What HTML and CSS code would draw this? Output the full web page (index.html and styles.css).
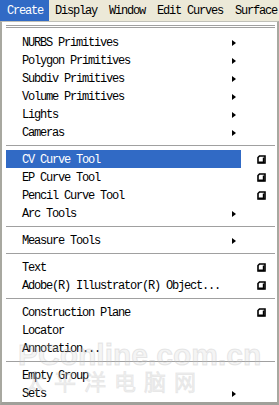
FILE: index.html
```html
<!DOCTYPE html>
<html>
<head>
<meta charset="utf-8">
<link rel="stylesheet" href="styles.css">
</head>
<body>
<div class="screen">
  <div class="menubar">
    <span class="mb-item active">Create</span>
    <span class="mb-item">Display</span>
    <span class="mb-item">Window</span>
    <span class="mb-item">Edit Curves</span>
    <span class="mb-item">Surface</span>
  </div>
  <div class="menu">
    <div class="tearoff"></div>

    <div class="row"><div class="item"><span class="label">NURBS Primitives</span><span class="arrow"></span></div><div class="opt"></div></div>
    <div class="row"><div class="item"><span class="label">Polygon Primitives</span><span class="arrow"></span></div><div class="opt"></div></div>
    <div class="row"><div class="item"><span class="label">Subdiv Primitives</span><span class="arrow"></span></div><div class="opt"></div></div>
    <div class="row"><div class="item"><span class="label">Volume Primitives</span><span class="arrow"></span></div><div class="opt"></div></div>
    <div class="row"><div class="item"><span class="label">Lights</span><span class="arrow"></span></div><div class="opt"></div></div>
    <div class="row"><div class="item"><span class="label">Cameras</span><span class="arrow"></span></div><div class="opt"></div></div>
    <div class="sep"></div>
    <div class="row"><div class="item selected"><span class="label">CV Curve Tool</span></div><div class="opt"><svg class="box" width="9" height="9" viewBox="0 0 9 9"><path d="M2.5 1H8V8H1V2.5Z" fill="#fff" stroke="#000" stroke-width="1.6"/><path d="M6.6 2.5V7.4H1.5" fill="none" stroke="#000" stroke-width="1.6"/></svg></div></div>
    <div class="row"><div class="item"><span class="label">EP Curve Tool</span></div><div class="opt"><svg class="box" width="9" height="9" viewBox="0 0 9 9"><path d="M2.5 1H8V8H1V2.5Z" fill="#fff" stroke="#000" stroke-width="1.6"/><path d="M6.6 2.5V7.4H1.5" fill="none" stroke="#000" stroke-width="1.6"/></svg></div></div>
    <div class="row"><div class="item"><span class="label">Pencil Curve Tool</span></div><div class="opt"><svg class="box" width="9" height="9" viewBox="0 0 9 9"><path d="M2.5 1H8V8H1V2.5Z" fill="#fff" stroke="#000" stroke-width="1.6"/><path d="M6.6 2.5V7.4H1.5" fill="none" stroke="#000" stroke-width="1.6"/></svg></div></div>
    <div class="row"><div class="item"><span class="label">Arc Tools</span><span class="arrow"></span></div><div class="opt"></div></div>
    <div class="sep"></div>
    <div class="row"><div class="item"><span class="label">Measure Tools</span><span class="arrow"></span></div><div class="opt"></div></div>
    <div class="sep"></div>
    <div class="row"><div class="item"><span class="label">Text</span></div><div class="opt"><svg class="box" width="9" height="9" viewBox="0 0 9 9"><path d="M2.5 1H8V8H1V2.5Z" fill="#fff" stroke="#000" stroke-width="1.6"/><path d="M6.6 2.5V7.4H1.5" fill="none" stroke="#000" stroke-width="1.6"/></svg></div></div>
    <div class="row"><div class="item"><span class="label">Adobe(R) Illustrator(R) Object...</span></div><div class="opt"><svg class="box" width="9" height="9" viewBox="0 0 9 9"><path d="M2.5 1H8V8H1V2.5Z" fill="#fff" stroke="#000" stroke-width="1.6"/><path d="M6.6 2.5V7.4H1.5" fill="none" stroke="#000" stroke-width="1.6"/></svg></div></div>
    <div class="sep"></div>
    <div class="row"><div class="item"><span class="label">Construction Plane</span></div><div class="opt"><svg class="box" width="9" height="9" viewBox="0 0 9 9"><path d="M2.5 1H8V8H1V2.5Z" fill="#fff" stroke="#000" stroke-width="1.6"/><path d="M6.6 2.5V7.4H1.5" fill="none" stroke="#000" stroke-width="1.6"/></svg></div></div>
    <div class="row"><div class="item"><span class="label">Locator</span></div><div class="opt"></div></div>
    <div class="row"><div class="item"><span class="label">Annotation...</span></div><div class="opt"></div></div>
    <div class="sep"></div>
    <div class="row"><div class="item"><span class="label">Empty Group</span></div><div class="opt"></div></div>
    <div class="row"><div class="item"><span class="label">Sets</span><span class="arrow"></span></div><div class="opt"></div></div>
  </div>
  <div class="watermark" aria-hidden="true">
    <div class="wm-en">PConline.com.cn</div>
    <div class="wm-cn">太平洋电脑网</div>
  </div>
</div>
</body>
</html>
```

FILE: styles.css
```css
html, body {
  margin: 0;
  padding: 0;
  background: #ffffff;
}
.screen {
  position: relative;
  width: 279px;
  height: 405px;
  overflow: hidden;
  font-family: "Liberation Mono", "DejaVu Sans Mono", monospace;
  font-size: 12px;
  letter-spacing: -1.2px;
  color: #000;
}
.menubar {
  display: flex;
  height: 21px;
  background: #ece9d8;
  white-space: nowrap;
}
.mb-item {
  display: flex;
  align-items: center;
  box-sizing: border-box;
  padding: 1px 6px 0 6px;
  height: 21px;
  flex: none;
}
.mb-item.active {
  background: #316ac5;
  color: #fff;
  padding-left: 7px;
  padding-right: 6px;
}
.menu {
  height: 384px;
  box-sizing: border-box;
  border-left: 2px solid #a8a8a0;
  border-right: 2px solid #a8a8a0;
  border-top: 1px solid #c0c0b8;
  border-bottom: 3px solid #a0a09a;
  padding: 0 0 0 4px;
  background: #fff;
}
.tearoff {
  height: 11px;
  box-sizing: border-box;
  margin-right: 2px;
  padding-top: 3px;
}
.tearoff::before {
  content: "";
  display: block;
  height: 1px;
  border-top: 1px solid #a0a0a0;
  border-bottom: 1px solid #a0a0a0;
}
.row {
  display: flex;
  height: 18px;
}
.item {
  width: 235px;
  flex: none;
  display: flex;
  align-items: center;
  box-sizing: border-box;
  padding: 1px 5px 0 16px;
  white-space: nowrap;
}
.item.selected {
  background: #316ac5;
  color: #fff;
}
.label {
  flex: none;
}
.arrow {
  margin-left: auto;
  width: 0;
  height: 0;
  border-top: 3.5px solid transparent;
  border-bottom: 3.5px solid transparent;
  border-left: 4px solid #000;
}
.opt {
  flex: 1;
  display: flex;
  align-items: center;
  padding-left: 16px;
}
.box {
  display: block;
}
.sep {
  height: 9px;
  box-sizing: border-box;
  padding-top: 4px;
  margin-right: 2px;
}
.sep::before {
  content: "";
  display: block;
  height: 0;
  border-top: 1px solid #a0a0a0;
  border-bottom: 1px solid #fff;
}
.watermark {
  position: absolute;
  left: 18px;
  top: 340px;
  pointer-events: none;
  color: rgba(200, 200, 200, 0.2);
  font-family: "Liberation Sans", "Noto Sans CJK SC", sans-serif;
  letter-spacing: 0;
}
.wm-en {
  font-size: 30px;
  font-weight: bold;
  line-height: 30px;
  -webkit-text-stroke: 1px rgba(190, 190, 190, 0.35);
}
.wm-cn {
  font-size: 22px;
  line-height: 26px;
  letter-spacing: 8px;
  padding-left: 6px;
  -webkit-text-stroke: 1px rgba(190, 190, 190, 0.3);
}
```
